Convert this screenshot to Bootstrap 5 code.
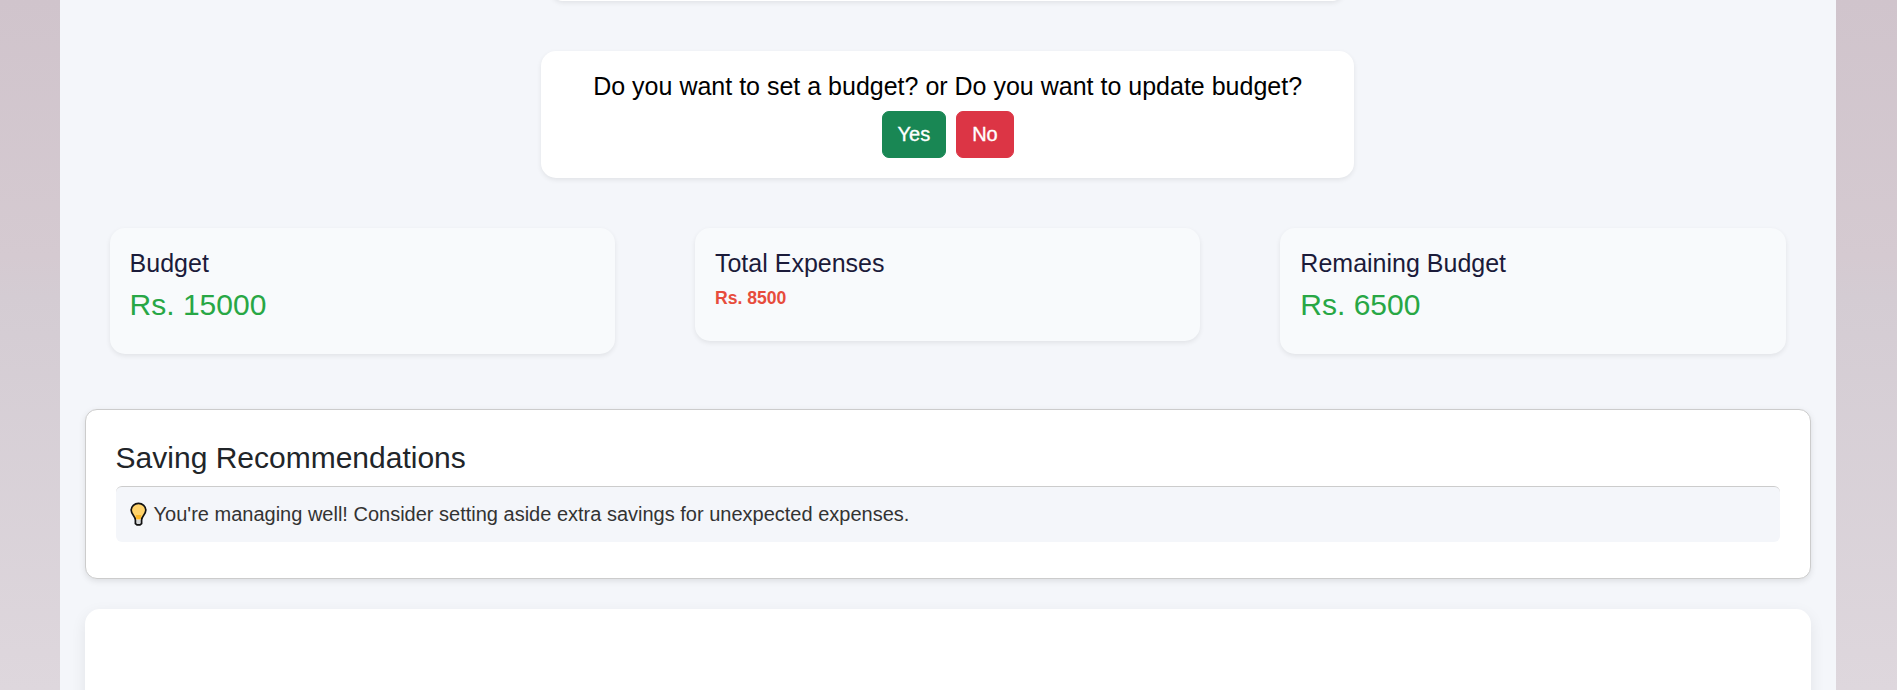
<!DOCTYPE html>
<html lang="en">
<head>
<meta charset="utf-8">
<meta name="viewport" content="width=device-width, initial-scale=1">
<title>Budget</title>
<link href="https://cdn.jsdelivr.net/npm/bootstrap@5.3.0/dist/css/bootstrap.min.css" rel="stylesheet">
<style>
html, body { height: 100%; }
body { font-family: "Liberation Sans", Arial, sans-serif; background: linear-gradient(#d0c4cc, #d5cad1 37%, #d4ccd3 43%, #ded7dd); overflow: hidden; }
.page-shell { margin: 0 61.3px 0 59.6px; padding: 0 25px; height: 690px; background: #f4f6fa; overflow: hidden; }
.soft-card { border-radius: 15px; box-shadow: 0 2px 5px rgba(0,0,0,.08); }
.form-end { width: 791px; height: 21px; margin-top: -20px; }
.prompt-card { width: 813px; height: 127px; margin-top: 50px; padding-top: 20px; color: #000; }
.prompt-card p { font-size: 25px; line-height: 30px; margin-bottom: 10px; }
.prompt-actions { gap: 10px; }
.prompt-card .btn { font-size: 20px; line-height: 31px; padding: 7px 15px; border-radius: 7px; -webkit-text-stroke: .35px #fff; }
.summary-row { padding: 50px 25px 0; gap: 80px; height: 231px; }
.stat-card { flex: 1 1 0; background: #f8fafc; padding: 20px; }
.stat-card h4 { font-size: 25px; line-height: 30px; margin-bottom: 8px; color: #1b1b3a; }
.stat-card .amount { font-size: 30px; line-height: 38px; margin-bottom: 10px; color: #28a745; }
.stat-card .spent { font-size: 17.6px; line-height: 25px; margin-bottom: 10px; font-weight: 700; color: #e74c3c; }
.advice-card { border: 1px solid #ccc; border-radius: 12px; padding: 30px; height: 170px; box-shadow: 0 2px 6px rgba(0,0,0,.1); }
.advice-card h3 { font-size: 30px; line-height: 36px; margin-bottom: 10px; }
.advice-item { height: 56px; border-top: 1px solid #ccc; border-radius: 6px; background: #f4f6fa; padding: 0 14px 2px; font-size: 20px; color: #333; gap: 7px; }
.chart-card { height: 200px; margin-top: 30px; border-radius: 15px; box-shadow: 0 5px 15px rgba(0,0,0,.08); }
</style>
</head>
<body>
<main class="page-shell">
  <div class="form-end soft-card bg-white mx-auto"></div>
  <section class="prompt-card soft-card bg-white mx-auto text-center">
    <p>Do you want to set a budget? or Do you want to update budget?</p>
    <div class="prompt-actions d-flex justify-content-center">
      <button class="btn btn-success" type="button">Yes</button>
      <button class="btn btn-danger" type="button">No</button>
    </div>
  </section>
  <section class="summary-row d-flex align-items-start">
    <div class="stat-card soft-card"><h4>Budget</h4><p class="amount">Rs. 15000</p></div>
    <div class="stat-card soft-card"><h4>Total Expenses</h4><p class="spent">Rs. 8500</p></div>
    <div class="stat-card soft-card"><h4>Remaining Budget</h4><p class="amount">Rs. 6500</p></div>
  </section>
  <section class="advice-card bg-white">
    <h3>Saving Recommendations</h3>
    <div class="advice-item d-flex align-items-center">
      <svg width="17" height="24" viewBox="0 0 17 24" aria-hidden="true"><path d="M5.200 17C5 13.500 1.200 12 1.200 8.300a7.300 7 0 0 1 14.600 0c0 3.700-3.800 5.200-4 8.700z" fill="#ffd36b"/><path d="M5.800 13h5.400l-.6 4.500H6.400z" fill="#fdb827"/><path d="M5.500 18h6v4l-1.500 1.200H7L5.500 22z" fill="#d5d7d8"/><path d="M5.400 18C5.400 14 1.200 12.300 1.200 8.300a7.300 7 0 0 1 14.600 0c0 4-4.200 5.700-4.200 9.700v3.600L10 22.900H7l-1.600-1.300z" fill="none" stroke="#111" stroke-width="1.700"/></svg>
      <span>You're managing well! Consider setting aside extra savings for unexpected expenses.</span>
    </div>
  </section>
  <section class="chart-card bg-white"></section>
</main>
<script src="https://cdn.jsdelivr.net/npm/bootstrap@5.3.0/dist/js/bootstrap.bundle.min.js"></script>
</body>
</html>
